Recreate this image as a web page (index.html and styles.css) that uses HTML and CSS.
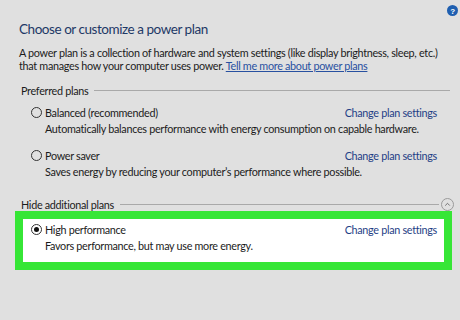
FILE: index.html
```html
<!DOCTYPE html>
<html lang="en">
<head>
    <meta charset="UTF-8">
    <meta name="viewport" content="width=device-width, initial-scale=1.0">
    <title>Power Options</title>
    <link rel="stylesheet" href="styles.css">
</head>
<body>
    <div class="page">
        <div class="top">
            <h1>Choose or customize a power plan</h1>
            <svg class="help" width="11" height="11" viewBox="0 0 11 11">
                <circle cx="5.5" cy="5.5" r="5.5" fill="#1f5fb0"/>
                <text x="5.5" y="8.5" text-anchor="middle" font-size="8" font-family="Liberation Sans, sans-serif" font-weight="bold" fill="#fff">?</text>
            </svg>
        </div>
        <p class="intro">
            A power plan is a collection of hardware and system settings (like display brightness, sleep, etc.)<br>
            that manages how your computer uses power. <a href="#">Tell me more about power plans</a>
        </p>

        <div class="group-title">
            <span>Preferred plans</span>
            <div class="rule"></div>
        </div>

        <div class="plan">
            <div class="plan-head">
                <label><span class="radio"></span>Balanced (recommended)</label>
                <a href="#">Change plan settings</a>
            </div>
            <div class="plan-desc">Automatically balances performance with energy consumption on capable hardware.</div>
        </div>

        <div class="plan">
            <div class="plan-head">
                <label><span class="radio"></span>Power saver</label>
                <a href="#">Change plan settings</a>
            </div>
            <div class="plan-desc">Saves energy by reducing your computer’s performance where possible.</div>
        </div>

        <div class="group-title hide">
            <span>Hide additional plans</span>
            <div class="rule"></div>
            <span class="chevron">
                <svg width="13" height="13" viewBox="0 0 13 13">
                    <circle cx="6.5" cy="6.5" r="6" fill="none" stroke="#9a9a9a"/>
                    <path d="M4.2 7.6 L6.5 5.3 L8.8 7.6" fill="none" stroke="#666" stroke-width="0.9"/>
                </svg>
            </span>
        </div>

        <div class="highlight">
            <div class="plan">
                <div class="plan-head">
                    <label><span class="radio checked"></span>High performance</label>
                    <a href="#">Change plan settings</a>
                </div>
                <div class="plan-desc">Favors performance, but may use more energy.</div>
            </div>
        </div>
    </div>
</body>
</html>
```

FILE: styles.css
```css
body {
    margin: 0;
    background: #e0e0e0;
    font-family: Lato, 'Noto Sans', sans-serif;
    font-size: 10.8px;
    letter-spacing: -0.3px;
    line-height: 13px;
    color: #1b1b1b;
    width: 460px;
    height: 320px;
    overflow: hidden;
}

.page {
    padding: 5px 0 0 19px;
}

.top {
    display: flex;
    justify-content: space-between;
    align-items: flex-start;
}

h1 {
    margin: 15px 0 0;
    font-size: 13.5px;
    letter-spacing: -0.45px;
    line-height: 18px;
    font-weight: normal;
    color: #1e3966;
}

.help {
    margin-right: 2px;
}

.intro {
    margin: 8px 0 0;
    white-space: nowrap;
}

a {
    color: #2850a0;
}

.plan-head a {
    color: #1f3f86;
    text-decoration: none;
}

.group-title {
    display: flex;
    align-items: center;
    gap: 6px;
    margin: 12px 10px 0 2px;
}

.group-title .rule {
    flex: 1;
    height: 1px;
    background: #a9a9a9;
}

.group-title.hide {
    margin-right: 6px;
    margin-top: 20px;
}

.chevron {
    display: flex;
    margin-left: -4px;
}

.plan {
    padding: 0 23px 0 12px;
}

.plan + .plan {
    padding-top: 5px;
}

.plan-head {
    display: flex;
    justify-content: space-between;
    align-items: center;
    margin-top: 9px;
}

.plan-head label {
    display: flex;
    align-items: center;
}

.radio {
    width: 11px;
    height: 11px;
    border: 1px solid #333;
    border-radius: 50%;
    margin-right: 3px;
    box-sizing: border-box;
    position: relative;
}

.radio.checked::after {
    content: "";
    position: absolute;
    left: 2px;
    top: 2px;
    width: 5px;
    height: 5px;
    border-radius: 50%;
    background: #111;
}

.plan-desc {
    margin: 3px 0 0 14px;
}

.highlight {
    margin: 0 8px 0 -4px;
    border: 8px solid #36e636;
    background: #fff;
    padding-bottom: 10px;
}

.highlight .plan {
    padding: 0 0 0 8px;
    margin-right: 7px;
}

.highlight .plan-head {
    margin-top: 4px;
}
```
